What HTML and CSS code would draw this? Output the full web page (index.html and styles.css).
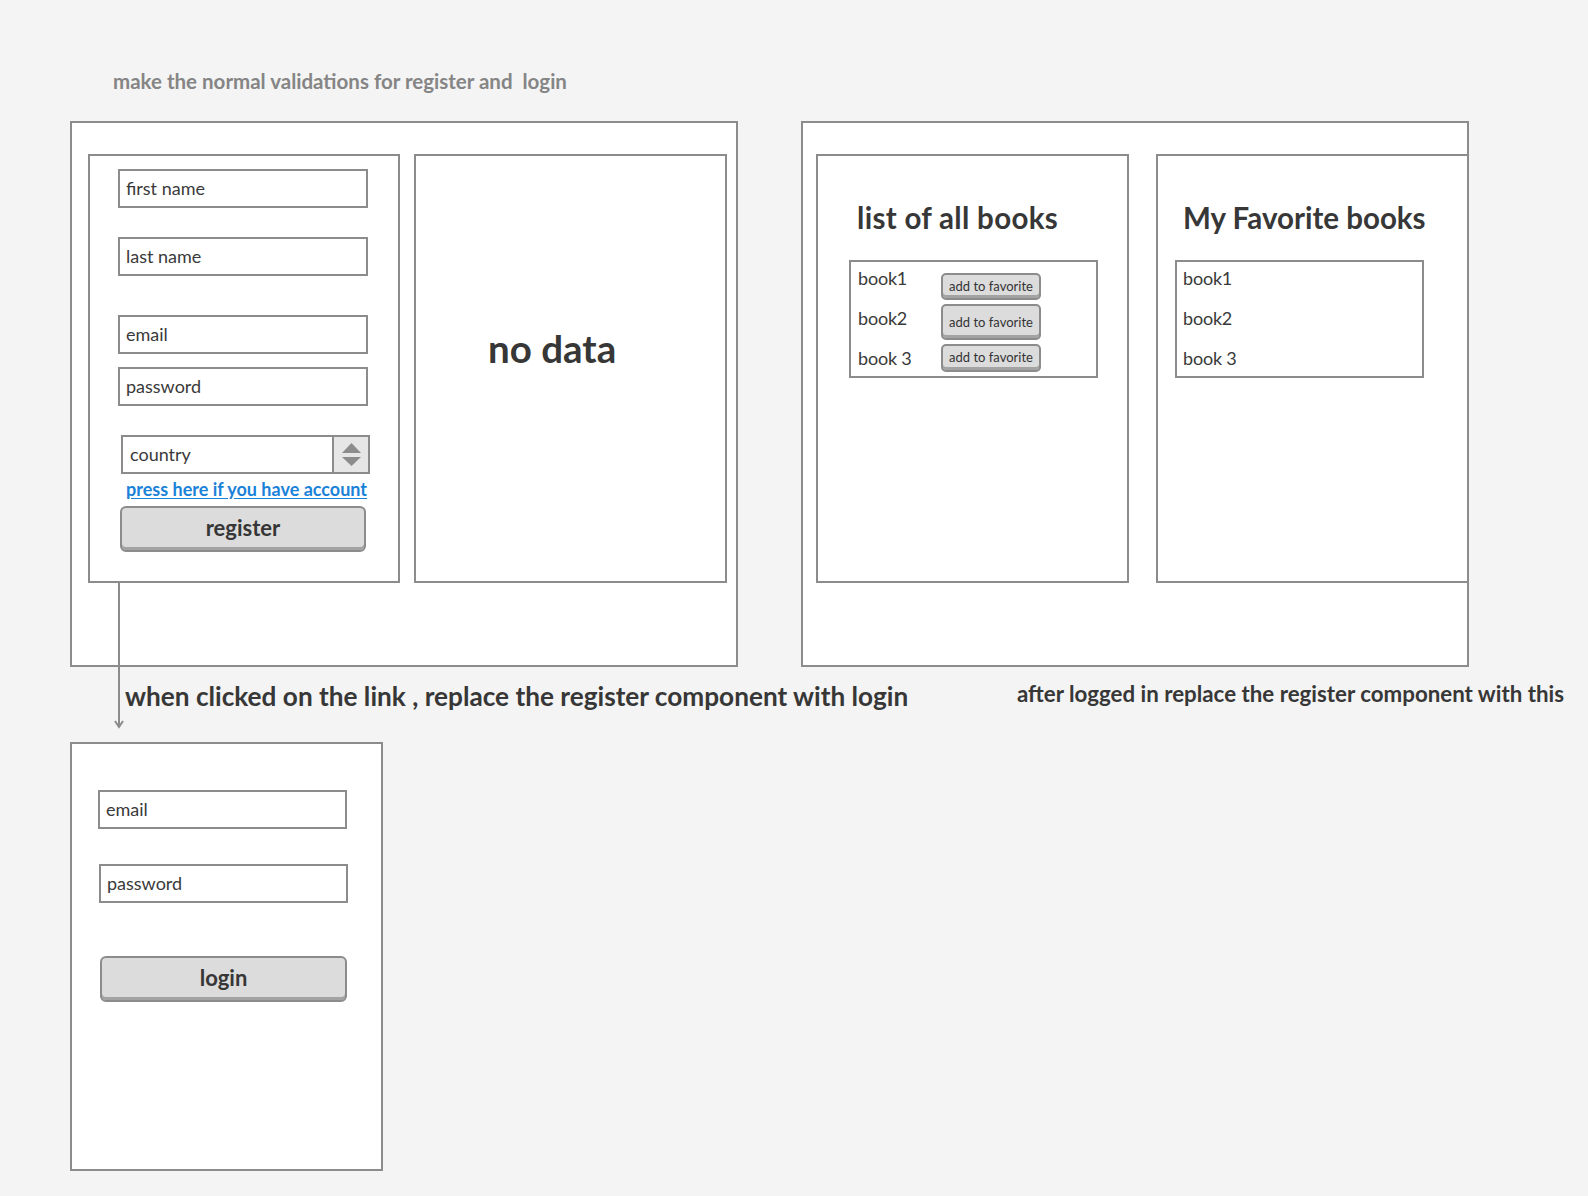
FILE: index.html
```html
<!DOCTYPE html>
<html lang="en">
<head>
<meta charset="utf-8">
<title>Books app wireframe</title>
<link rel="stylesheet" href="styles.css">
</head>
<body>
<div class="canvas">
  <p class="note">make the normal validations for register and&nbsp; login</p>

  <section class="screen screen-left">
    <div class="panel register">
      <div class="input in-first">first name</div>
      <div class="input in-last">last name</div>
      <div class="input in-email">email</div>
      <div class="input in-pass">password</div>
      <div class="select">
        <span class="select-text">country</span>
        <span class="spinner">
          <svg width="34" height="35" viewBox="0 0 34 35">
            <polygon points="8,16 17.5,6 27,16" fill="#8c8c8c"/>
            <polygon points="8,20 27,20 17.5,29" fill="#8c8c8c"/>
          </svg>
        </span>
      </div>
      <a class="link" href="#">press here if you have account</a>
      <div class="button btn-register">register</div>
    </div>
    <div class="panel nodata"><span class="nodata-text">no data</span></div>
  </section>

  <section class="screen screen-right">
    <div class="panel books">
      <h2 class="title title-all">list of all books</h2>
      <div class="list list-all">
        <div class="row row-1"><span class="book">book1</span><span class="small-btn">add to favorite</span></div>
        <div class="row row-2"><span class="book">book2</span><span class="small-btn small-btn-tall">add to favorite</span></div>
        <div class="row row-3"><span class="book">book 3</span><span class="small-btn">add to favorite</span></div>
      </div>
    </div>
    <div class="panel favs">
      <h2 class="title title-fav">My Favorite books</h2>
      <div class="list list-fav">
        <span class="book">book1</span>
        <span class="book">book2</span>
        <span class="book">book 3</span>
      </div>
    </div>
  </section>

  <svg class="connector" width="14" height="148" viewBox="0 0 14 148">
    <line x1="7" y1="0" x2="7" y2="145" stroke="#8c8c8c" stroke-width="2"/>
    <polyline points="3,139 7,145 11,139" fill="none" stroke="#8c8c8c" stroke-width="2"/>
  </svg>

  <p class="caption caption-login">when clicked on the link , replace the register component with login</p>
  <p class="caption caption-logged">after logged in replace the register component with this</p>

  <section class="panel login">
    <div class="input in-login-email">email</div>
    <div class="input in-login-pass">password</div>
    <div class="button btn-login">login</div>
  </section>
</div>
</body>
</html>
```

FILE: styles.css
```css
* {
  box-sizing: border-box;
}

html, body {
  margin: 0;
  padding: 0;
  background: #f4f4f4;
}

body {
  font-family: Lato, "Open Sans", "Liberation Sans", sans-serif;
  color: #373737;
}

.canvas {
  position: relative;
  width: 1588px;
  height: 1196px;
  overflow: hidden;
}

/* free-canvas items of the wireframe */
.note {
  position: absolute;
  left: 113px;
  top: 69px;
  margin: 0;
  font-size: 20.5px;
  font-weight: 700;
  line-height: 24px;
  color: #858585;
  white-space: nowrap;
}

.screen {
  position: absolute;
  top: 121px;
  width: 668px;
  height: 546px;
  background: #fff;
  border: 2px solid #8c8c8c;
  display: flex;
  align-items: flex-start;
}

.screen-left {
  left: 70px;
  padding: 31px 0 0 16px;
  gap: 14px;
}

.screen-right {
  left: 801px;
  padding: 31px 0 0 13px;
  gap: 27px;
}

.panel {
  background: #fff;
  border: 2px solid #8c8c8c;
  height: 429px;
  flex: none;
}

/* register panel */
.register {
  width: 312px;
  padding-top: 13px;
  display: flex;
  flex-direction: column;
  align-items: flex-start;
}

.input {
  width: 250px;
  height: 39px;
  border: 2px solid #8c8c8c;
  background: #fff;
  padding-left: 6px;
  font-size: 18px;
  line-height: 35px;
  color: #3a3a3a;
  white-space: nowrap;
}

.in-first { margin-left: 28px; }
.in-last { margin-left: 28px; margin-top: 29px; }
.in-email { margin-left: 28px; margin-top: 39px; }
.in-pass { margin-left: 28px; margin-top: 13px; }

.select {
  margin-left: 31px;
  margin-top: 29px;
  width: 249px;
  height: 39px;
  border: 2px solid #8c8c8c;
  display: flex;
}

.select-text {
  flex: 1;
  padding-left: 7px;
  font-size: 18px;
  line-height: 35px;
  color: #3a3a3a;
}

.spinner {
  width: 36px;
  height: 35px;
  border-left: 2px solid #8c8c8c;
  background: #e6e6e6;
  display: block;
}

.spinner svg {
  display: block;
}

.link {
  display: block;
  margin-left: 36px;
  margin-top: 4px;
  font-size: 18px;
  line-height: 22px;
  font-weight: 700;
  color: #1b82d9;
  text-decoration: underline;
  text-underline-offset: 2px;
  white-space: nowrap;
}

.button {
  height: 46px;
  border: 2px solid #8c8c8c;
  border-radius: 6px;
  background: #dcdcdc;
  box-shadow: inset 0 -3px 0 #a3a3a3;
  text-align: center;
  font-size: 22px;
  font-weight: 700;
  line-height: 40px;
  color: #363636;
}

.btn-register {
  margin-left: 30px;
  margin-top: 6px;
  width: 246px;
}

/* no data panel */
.nodata {
  width: 313px;
  padding: 170px 0 0 72px;
}

.nodata-text {
  display: block;
  font-size: 38.5px;
  font-weight: 700;
  line-height: 44px;
  color: #373737;
}

/* books panels */
.books,
.favs {
  width: 313px;
}

.title {
  margin: 44px 0 0;
  font-size: 29.5px;
  line-height: 36px;
  font-weight: 700;
  color: #373737;
  white-space: nowrap;
}

.title-all { margin-left: 39px; letter-spacing: 0.3px; }
.title-fav { margin-left: 25px; }

.list {
  margin-top: 24px;
  width: 249px;
  height: 118px;
  border: 2px solid #8c8c8c;
  background: #fff;
}

.list-all {
  margin-left: 31px;
  display: grid;
  grid-template-rows: 40px 40px 34px;
}

.list-fav {
  margin-left: 17px;
  display: grid;
  grid-template-rows: 40px 40px 34px;
}

.book {
  display: block;
  font-size: 18px;
  line-height: 20px;
  color: #3a3a3a;
  white-space: nowrap;
  letter-spacing: -0.2px;
}

.list-all .book {
  width: 90px;
  padding-left: 7px;
  margin-top: 6px;
}

.list-fav .book {
  padding-left: 6px;
  margin-top: 6px;
}

.row {
  display: flex;
  align-items: flex-start;
}

.small-btn {
  display: block;
  width: 100px;
  height: 28px;
  border: 2px solid #8c8c8c;
  border-radius: 5px;
  background: #dcdcdc;
  box-shadow: inset 0 -3px 0 #a3a3a3;
  text-align: center;
  font-size: 13px;
  line-height: 23px;
  color: #333;
  white-space: nowrap;
}

.row-1 .small-btn { margin-top: 11px; height: 27px; line-height: 22px; }
.row-2 .small-btn { margin-top: 2px; }
.row-3 .small-btn { margin-top: 2px; }

.small-btn-tall {
  height: 36px;
  line-height: 32px;
}

/* connector + captions */
.connector {
  position: absolute;
  left: 112px;
  top: 582px;
}

.caption {
  position: absolute;
  margin: 0;
  font-weight: 700;
  color: #373737;
  white-space: nowrap;
}

.caption-login {
  left: 125px;
  top: 681px;
  font-size: 26.2px;
  line-height: 30px;
}

.caption-logged {
  left: 1017px;
  top: 681px;
  font-size: 22.3px;
  line-height: 26px;
}

/* login panel */
.login {
  position: absolute;
  left: 70px;
  top: 742px;
  width: 313px;
  padding-top: 46px;
  display: flex;
  flex-direction: column;
  align-items: flex-start;
}

.in-login-email {
  margin-left: 26px;
  width: 249px;
}

.in-login-pass {
  margin-left: 27px;
  margin-top: 35px;
  width: 249px;
}

.btn-login {
  margin-left: 28px;
  margin-top: 53px;
  width: 247px;
}
```
